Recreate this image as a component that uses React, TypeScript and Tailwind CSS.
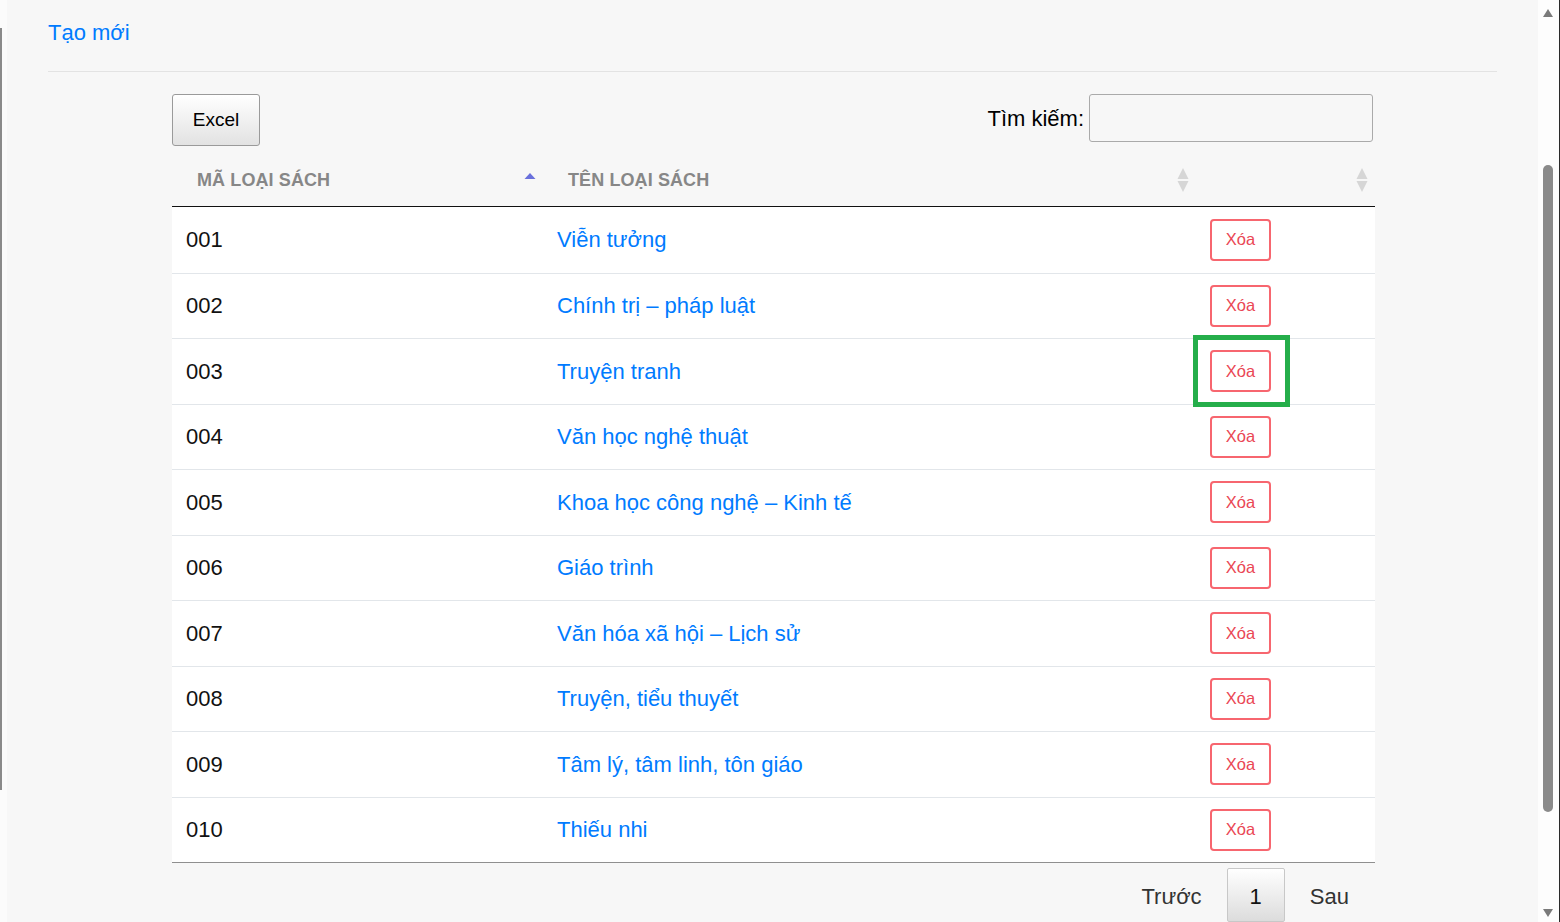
import React from "react";

const ROWS: { code: string; name: string }[] = [
  { code: "001", name: "Viễn tưởng" },
  { code: "002", name: "Chính trị – pháp luật" },
  { code: "003", name: "Truyện tranh" },
  { code: "004", name: "Văn học nghệ thuật" },
  { code: "005", name: "Khoa học công nghệ – Kinh tế" },
  { code: "006", name: "Giáo trình" },
  { code: "007", name: "Văn hóa xã hội – Lịch sử" },
  { code: "008", name: "Truyện, tiểu thuyết" },
  { code: "009", name: "Tâm lý, tâm linh, tôn giáo" },
  { code: "010", name: "Thiếu nhi" },
];

function SortIcon({ mode }: { mode: "asc" | "both" }) {
  return (
    <svg width="12" height="28" viewBox="0 0 12 28" className="shrink-0">
      {mode === "asc" ? (
        <polygon points="6,9 0.5,15 11.5,15" fill="#6a70dc" />
      ) : (
        <>
          <polygon points="6,4 0.5,15 11.5,15" fill="#d6d6d6" />
          <polygon points="0.5,17 11.5,17 6,28" fill="#d6d6d6" />
        </>
      )}
    </svg>
  );
}

function HeaderCell({ label, mode }: { label: string; mode: "asc" | "both" }) {
  return (
    <div className="flex items-center justify-between pl-[25px] pr-[7px] h-[56px]">
      <span className="mt-[4px] text-[18px] font-bold uppercase tracking-[0.1px] text-[#878787]">{label}</span>
      <SortIcon mode={mode} />
    </div>
  );
}

function Scrollbar() {
  return (
    <div className="w-[22px] shrink-0 bg-[#fdfdfd] border-r border-[#2a2a2a] flex flex-col items-start pl-[5px]">
      <svg width="10" height="8" viewBox="0 0 10 8" className="mt-[9px]">
        <polygon points="5,0 0,8 10,8" fill="#7a7a7a" />
      </svg>
      <div className="mt-[148px] w-[10px] h-[647px] rounded-full bg-[#8a8a8a]" />
      <svg width="10" height="8" viewBox="0 0 10 8" className="mt-[97px]">
        <polygon points="0,0 10,0 5,8" fill="#7a7a7a" />
      </svg>
    </div>
  );
}

export default function App() {
  return (
    <div className="flex h-[922px] overflow-hidden bg-[#f7f7f7] font-['Liberation_Sans',Arial,sans-serif] text-[#111]">
      {/* left window edge */}
      <div className="w-[7px] shrink-0 bg-[#fbfbfb]">
        <div className="mt-[28px] h-[762px] w-[2px] bg-[#8a8a8a]" />
      </div>

      <main className="flex-1 px-[41px]">
        <div className="pt-[16px]">
          <a className="text-[22px] leading-[33px] text-[#007bff] cursor-pointer">Tạo mới</a>
        </div>
        <div className="mt-[22px] border-t border-[#e3e3e3]" />

        <div className="ml-[124px] mr-auto w-[1203px] mt-[22px]">
          {/* controls */}
          <div className="flex items-start justify-between">
            <button className="w-[88px] h-[52px] rounded-[3px] border border-[#9a9a9a] bg-gradient-to-b from-white to-[#e2e2e2] text-[19px] text-black">
              Excel
            </button>
            <label className="flex items-center gap-[5px] mr-[2px] text-[22px] text-black">
              Tìm kiếm:
              <input className="w-[284px] h-[48px] rounded-[3px] border border-[#aaaaaa] bg-transparent px-2 outline-none" />
            </label>
          </div>

          {/* table */}
          <div className="mt-[4px] border-b border-[#8f8f8f]">
            <div className="grid grid-cols-[371px_653px_179px] border-b border-[#111]">
              <HeaderCell label="Mã loại sách" mode="asc" />
              <HeaderCell label="Tên loại sách" mode="both" />
              <HeaderCell label="" mode="both" />
            </div>
            {ROWS.map((r, i) => (
              <div
                key={r.code}
                className="grid grid-cols-[371px_653px_179px] h-[65.5px] bg-white border-t border-[#e2e6ea]"
                style={i === 0 ? { borderTopWidth: 0 } : undefined}
              >
                <div className="flex items-center pl-[14px] text-[22px]">{r.code}</div>
                <div className="flex items-center pl-[14px] text-[22px] text-[#007bff]">{r.name}</div>
                <div className="relative flex items-center pl-[14px]">
                  <button className="w-[61px] h-[42px] rounded-[4px] border-2 border-[#f7666f] text-[16.5px] text-[#ea4654] bg-white">
                    Xóa
                  </button>
                  {i === 2 && (
                    <div className="absolute left-[-3px] top-[-4px] w-[97px] h-[72px] border-[5px] border-[#25ae4a] pointer-events-none" />
                  )}
                </div>
              </div>
            ))}
          </div>

          {/* pagination */}
          <div className="flex justify-end mt-[5px] mr-[3px] text-[22px] leading-[26px] text-[#333]">
            <span className="px-[22px] pt-[15px] pb-[11px] border border-transparent">Trước</span>
            <span className="ml-[2px] px-[22px] pt-[15px] pb-[11px] rounded-[2px] border border-[#c8c8c8] bg-gradient-to-b from-white to-[#dcdcdc] text-[#111]">
              1
            </span>
            <span className="ml-[2px] px-[22px] pt-[15px] pb-[11px] border border-transparent">Sau</span>
          </div>
        </div>
      </main>

      <Scrollbar />
    </div>
  );
}
